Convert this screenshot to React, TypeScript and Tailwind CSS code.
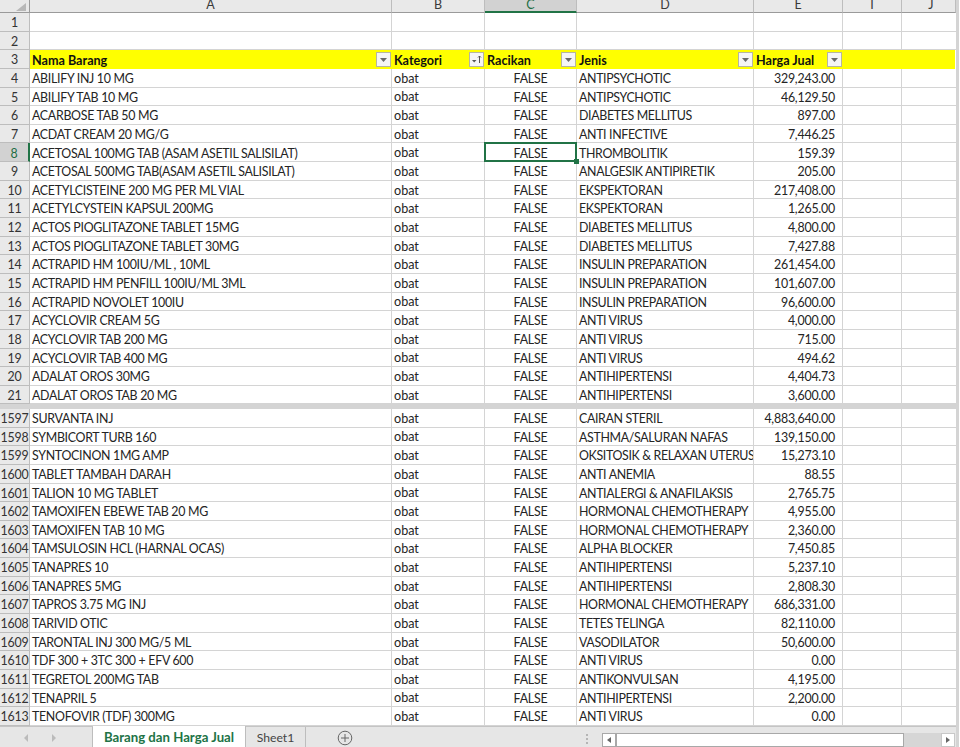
const top1 = [
["ABILIFY INJ 10 MG","ANTIPSYCHOTIC","329,243.00"],
["ABILIFY TAB 10 MG","ANTIPSYCHOTIC","46,129.50"],
["ACARBOSE TAB 50 MG","DIABETES MELLITUS","897.00"],
["ACDAT CREAM 20 MG/G","ANTI INFECTIVE","7,446.25"],
["ACETOSAL 100MG TAB (ASAM ASETIL SALISILAT)","THROMBOLITIK","159.39"],
["ACETOSAL 500MG TAB(ASAM ASETIL SALISILAT)","ANALGESIK ANTIPIRETIK","205.00"],
["ACETYLCISTEINE 200 MG PER ML VIAL","EKSPEKTORAN","217,408.00"],
["ACETYLCYSTEIN KAPSUL 200MG","EKSPEKTORAN","1,265.00"],
["ACTOS PIOGLITAZONE TABLET 15MG","DIABETES MELLITUS","4,800.00"],
["ACTOS PIOGLITAZONE TABLET 30MG","DIABETES MELLITUS","7,427.88"],
["ACTRAPID HM 100IU/ML , 10ML","INSULIN PREPARATION","261,454.00"],
["ACTRAPID HM PENFILL 100IU/ML 3ML","INSULIN PREPARATION","101,607.00"],
["ACTRAPID NOVOLET 100IU","INSULIN PREPARATION","96,600.00"],
["ACYCLOVIR CREAM 5G","ANTI VIRUS","4,000.00"],
["ACYCLOVIR TAB 200 MG","ANTI VIRUS","715.00"],
["ACYCLOVIR TAB 400 MG","ANTI VIRUS","494.62"],
["ADALAT OROS 30MG","ANTIHIPERTENSI","4,404.73"],
["ADALAT OROS TAB 20 MG","ANTIHIPERTENSI","3,600.00"],
];
const bottom = [
["SURVANTA INJ","CAIRAN STERIL","4,883,640.00"],
["SYMBICORT TURB 160","ASTHMA/SALURAN NAFAS","139,150.00"],
["SYNTOCINON 1MG AMP","OKSITOSIK & RELAXAN UTERUS","15,273.10"],
["TABLET TAMBAH DARAH","ANTI ANEMIA","88.55"],
["TALION 10 MG TABLET","ANTIALERGI & ANAFILAKSIS","2,765.75"],
["TAMOXIFEN EBEWE TAB 20 MG","HORMONAL CHEMOTHERAPY","4,955.00"],
["TAMOXIFEN TAB 10 MG","HORMONAL CHEMOTHERAPY","2,360.00"],
["TAMSULOSIN HCL (HARNAL OCAS)","ALPHA BLOCKER","7,450.85"],
["TANAPRES 10","ANTIHIPERTENSI","5,237.10"],
["TANAPRES 5MG","ANTIHIPERTENSI","2,808.30"],
["TAPROS 3.75 MG INJ","HORMONAL CHEMOTHERAPY","686,331.00"],
["TARIVID OTIC","TETES TELINGA","82,110.00"],
["TARONTAL INJ 300 MG/5 ML","VASODILATOR","50,600.00"],
["TDF 300 + 3TC 300 + EFV 600","ANTI VIRUS","0.00"],
["TEGRETOL 200MG TAB","ANTIKONVULSAN","4,195.00"],
["TENAPRIL 5","ANTIHIPERTENSI","2,200.00"],
["TENOFOVIR (TDF) 300MG","ANTI VIRUS","0.00"],
];

const cellBase = "border-r border-b border-[#d4d4d4] h-full flex items-center whitespace-nowrap pt-[3px]";
const cell = `${cellBase} overflow-hidden`;

function Arrow({ sorted }: { sorted?: boolean }) {
  return (
    <span className="w-[15px] h-[15px] bg-[#f5f5f5] border border-[#b5b5a0] flex items-center justify-center shrink-0">
      <svg width="13" height="13" viewBox="0 0 13 13">
        {sorted ? (
          <>
            <path d="M2 7h4.5L4.2 9.5z" fill="#555" />
            <path d="M9.5 3v7M8 4.5l1.5-1.5L11 4.5" stroke="#555" fill="none" strokeWidth="1" />
          </>
        ) : (
          <path d="M3 5h7L6.5 9z" fill="#6a6a6a" />
        )}
      </svg>
    </span>
  );
}

function Gutter({ n, active }: { n: number; active?: boolean }) {
  return (
    <div className={`w-[30px] shrink-0 h-full flex items-center justify-center pt-[3px] border-r border-b border-[#bdbdbd] text-[12.4px] tracking-[-0.2px] ${active ? "bg-[#d2d2d2] text-[#1f6e43] border-r-2 border-r-[#217346]" : "bg-[#e9e9e9] text-[#333]"}`}>
      {n}
    </div>
  );
}

function EmptyTail() {
  return (
    <>
      <div className={`${cell} w-[59px]`} />
      <div className={`${cell} w-[54px] border-r-0`} />
    </>
  );
}

function DataRow({ n, r, selected }: { n: number; r: string[]; selected?: boolean }) {
  return (
    <div className="flex h-[18.65px]">
      <Gutter n={n} active={selected} />
      <div className={`${cell} w-[362px] pl-[2px] tracking-[-0.3px]`}>{r[0]}</div>
      <div className={`${cellBase} w-[93px] pl-[2px] text-[12.6px]`}>obat</div>
      <div className={`${cellBase} tracking-[-0.22px] w-[92px] justify-center relative`}>
        FALSE
        {selected && (
          <>
            <span className="absolute -top-px -bottom-px -left-px -right-px border-2 border-[#217346]" />
            <span className="absolute -right-[3px] -bottom-[3px] w-[5px] h-[5px] bg-[#217346] z-10" />
          </>
        )}
      </div>
      <div className={`${cell} w-[177px] pl-[2px] tracking-[-0.35px]`}>{r[1]}</div>
      <div className={`${cell} w-[89px] justify-end pr-[7px] tracking-[-0.22px]`}>{r[2]}</div>
      <EmptyTail />
    </div>
  );
}

function Head({ w, label, active, shift }: { w: string; label: string; active?: boolean; shift?: boolean }) {
  return (
    <div className={`${w} shrink-0 h-full flex items-center justify-center border-r border-[#bdbdbd] border-b text-[12.5px] leading-none overflow-hidden ${shift ? "pl-[5px]" : ""} ${active ? "bg-[#d2d2d2] text-[#1f6e43] border-b-2 border-b-[#217346]" : "bg-[#e9e9e9] border-b-[#9a9a9a] text-[#3a3a3a]"}`}>
      <span className="-mt-[1px]">{label}</span>
    </div>
  );
}

function FilterCell({ w, label, sorted }: { w: string; label: string; sorted?: boolean }) {
  return (
    <div className={`${w} h-full flex items-center justify-between pl-[2px] pr-[1px] font-bold text-[#111]`}>
      <span className="pt-[3px]">{label}</span>
      <Arrow sorted={sorted} />
    </div>
  );
}

export default function App() {
  return (
    <div className="w-[960px] h-[747px] overflow-hidden bg-white flex text-[12.4px] text-[#242424] [font-family:Lato,'Open_Sans',sans-serif]">
      <div className="w-[956px] h-full shrink-0 flex flex-col">
        <div className="flex h-[13px] shrink-0">
          <div className="w-[30px] h-full bg-[#e9e9e9] border-r border-b border-[#9a9a9a] flex items-end justify-end pr-[3px] pb-[1px]">
            <span className="w-0 h-0 border-l-[10px] border-l-transparent border-b-[8px] border-b-[#b8b8b8]" />
          </div>
          <Head w="w-[362px]" label="A" />
          <Head w="w-[93px]" label="B" />
          <Head w="w-[92px]" label="C" active />
          <Head w="w-[177px]" label="D" />
          <Head w="w-[89px]" label="E" />
          <Head w="w-[59px]" label="I" />
          <Head w="w-[54px]" label="J" shift />
        </div>

        <div className="flex-1 min-h-0 overflow-hidden">
          {[1, 2].map((n) => (
            <div key={n} className="flex h-[18.65px]">
              <Gutter n={n} />
              <div className={`${cell} w-[362px]`} />
              <div className={`${cell} w-[93px]`} />
              <div className={`${cell} w-[92px]`} />
              <div className={`${cell} w-[177px]`} />
              <div className={`${cell} w-[89px]`} />
              <EmptyTail />
            </div>
          ))}
          <div className="flex h-[18.65px]">
            <Gutter n={3} />
            <div className="w-[925px] h-full bg-[#ffff00] flex text-[12.6px]">
              <FilterCell w="w-[362px]" label="Nama Barang" />
              <FilterCell w="w-[93px]" label="Kategori" sorted />
              <FilterCell w="w-[92px]" label="Racikan" />
              <FilterCell w="w-[177px]" label="Jenis" />
              <FilterCell w="w-[89px]" label="Harga Jual" />
            </div>
          </div>
          {top1.map((r, i) => (
            <DataRow key={i} n={i + 4} r={r} selected={i === 4} />
          ))}
          <div className="h-[4.5px] bg-[#d4d4d4]" />
          {bottom.map((r, i) => (
            <DataRow key={i} n={i + 1597} r={r} />
          ))}
        </div>

        <div className="h-[21px] shrink-0 bg-[#e6e6e6] flex items-stretch border-t border-[#c4c4c4]">
          <div className="w-[93px] shrink-0 flex items-center pl-[24px] pt-[2px] gap-[22px] border-r border-[#bdbdbd] text-[#bbbbbb]">
            <svg width="5" height="8" viewBox="0 0 5 8"><path d="M4 0v8L0 4z" fill="currentColor" /></svg>
            <svg width="5" height="8" viewBox="0 0 5 8"><path d="M1 0v8l4-4z" fill="currentColor" /></svg>
          </div>
          <div className="w-[153px] shrink-0 -mt-px pt-[2px] bg-white border-r border-[#bdbdbd] flex items-center justify-center font-bold text-[13.2px] text-[#217346]">Barang dan Harga Jual</div>
          <div className="w-[60px] shrink-0 pt-[2px] flex items-center justify-center border-r border-[#bdbdbd] text-[12.2px] text-[#444]">Sheet1</div>
          <div className="w-[78px] shrink-0 pt-[2px] flex items-center justify-center text-[#666]">
            <svg width="16" height="16" viewBox="0 0 16 16" fill="none" stroke="currentColor">
              <circle cx="8" cy="8" r="6.8" />
              <path d="M8 4v8M4 8h8" />
            </svg>
          </div>
          <div className="w-[218px] shrink-0 flex items-center justify-end pr-[14px] pt-[3px]">
            <span className="flex flex-col gap-[2px]">
              <i className="w-[2px] h-[2px] bg-[#b5b5b5]" />
              <i className="w-[2px] h-[2px] bg-[#b5b5b5]" />
              <i className="w-[2px] h-[2px] bg-[#b5b5b5]" />
            </span>
          </div>
          <div className="flex-1 flex items-stretch pt-[6px] pr-[1px]">
            <div className="w-[14px] bg-white border border-[#a8a8a8] flex items-center justify-center">
              <svg width="4" height="6" viewBox="0 0 4 6"><path d="M4 0v6L0 3z" fill="#666" /></svg>
            </div>
            <div className="w-[288px] bg-white border border-[#a8a8a8]" />
            <div className="flex-1 bg-[#d6d6d6]" />
            <div className="w-[14px] bg-white border border-[#c8c8c8] flex items-center justify-center">
              <svg width="4" height="6" viewBox="0 0 4 6"><path d="M0 0v6l4-3z" fill="#666" /></svg>
            </div>
          </div>
        </div>
      </div>
      <div className="w-[3px] h-full shrink-0 bg-[#d4d4d4]" />
    </div>
  );
}
